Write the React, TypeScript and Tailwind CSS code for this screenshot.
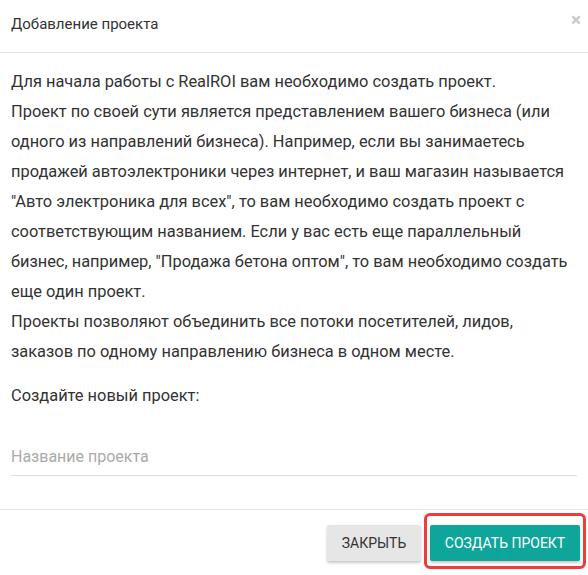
import { useState } from "react";

const intro = [
  "Для начала работы с RealROI вам необходимо создать проект.",
  "Проект по своей сути является представлением вашего бизнеса (или",
  "одного из направлений бизнеса). Например, если вы занимаетесь",
  "продажей автоэлектроники через интернет, и ваш магазин называется",
  "\"Авто электроника для всех\", то вам необходимо создать проект с",
  "соответствующим названием. Если у вас есть еще параллельный",
  "бизнес, например, \"Продажа бетона оптом\", то вам необходимо создать",
  "еще один проект.",
  "Проекты позволяют объединить все потоки посетителей, лидов,",
  "заказов по одному направлению бизнеса в одном месте.",
];

export default function App() {
  const [name, setName] = useState("");

  return (
    <div className="w-[588px] h-[575px] bg-white text-[#333] font-['Roboto',sans-serif] flex flex-col">
      {/* Header */}
      <div className="h-[53px] shrink-0 border-b border-[#e5e5e5] px-[11px] flex items-start justify-between">
        <h4 className="text-[15px] leading-[20px] mt-[14px]">Добавление проекта</h4>
        <button
          type="button"
          className="text-[#c8c8c8] text-[19px] leading-none font-bold mt-[10px] -mr-[4px]"
          aria-label="Закрыть"
        >
          ×
        </button>
      </div>

      {/* Body */}
      <div className="flex-1 px-[11px] pt-[14px]">
        <p className="text-[16.4px] leading-[30px] whitespace-nowrap">
          {intro.map((line, i) => (
            <span key={i} className="block">
              {line}
            </span>
          ))}
        </p>
        <p className="text-[16.4px] leading-[30px] mt-[14px]">Создайте новый проект:</p>
        <input
          type="text"
          value={name}
          onChange={(e) => setName(e.target.value)}
          placeholder="Название проекта"
          className="mt-[27px] w-full h-[38px] border-b border-[#dcdcdc] text-[16px] outline-none placeholder:text-[#aaa] bg-transparent"
        />
      </div>

      {/* Footer */}
      <div className="h-[66px] shrink-0 border-t border-[#e5e5e5] flex items-start justify-end gap-[3px] pr-[2px] pt-[15px]">
        <button
          type="button"
          className="h-[36px] w-[94px] rounded-[2px] bg-[#e6e6e6] text-[14px] text-[#333] uppercase shadow-[0_2px_3px_rgba(0,0,0,0.22)]"
        >
          Закрыть
        </button>
        <div className="-mt-[12px] px-[3px] pt-[9px] pb-[5px] border-[3px] border-[#ee3b3b] rounded-[6px]">
          <button
            type="button"
            className="block h-[36px] w-[150px] rounded-[2px] bg-[#0ea69a] text-[14px] text-white uppercase shadow-[0_2px_3px_rgba(0,0,0,0.22)]"
          >
            Создать проект
          </button>
        </div>
      </div>
    </div>
  );
}
